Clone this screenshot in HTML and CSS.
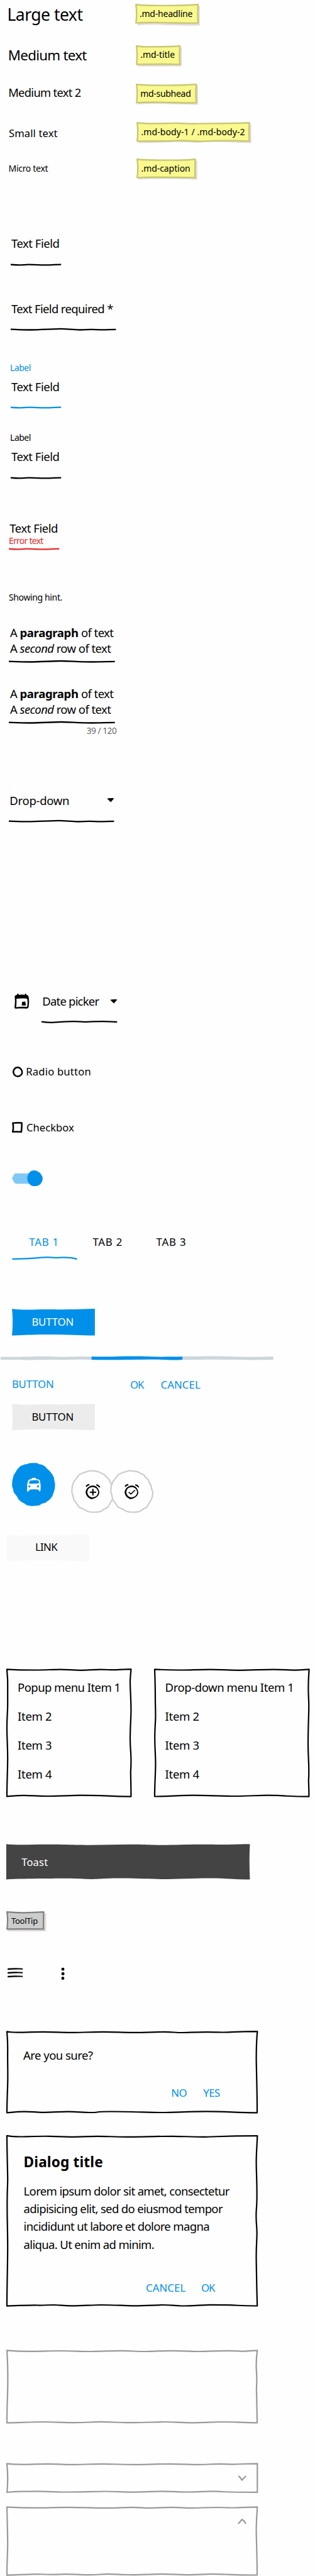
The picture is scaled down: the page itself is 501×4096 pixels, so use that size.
FILE: index.html
```
<!DOCTYPE html>
<html lang="en">
<head>
<meta charset="utf-8">
<title>Wireframe kit</title>
<link rel="stylesheet" href="styles.css">
</head>
<body>
<main class="page">

  <section class="spec spec-headline">
    <div class="t-headline">Large text</div>
    <div class="note note-headline">
      <svg class="sketch"><path class="shade" d="M3.3 4.8 102.7 3.5V34.6C70 35.6 20 31 3.3 34.6Z"/><path class="paper" d="M1.2 1.2C15 3.2 66 3.6 100 1.3C99.6 10 99.4 22 100 30.4C70 31.6 38 28.4 1.2 30.4C2.6 20 2.4 9 1.2 1.2Z"/></svg>
      <span>.md-headline</span>
    </div>
  </section>
  <section class="spec spec-title">
    <div class="t-title">Medium text</div>
    <div class="note note-title">
      <svg class="sketch"><path class="shade" d="M3.3 4.8 73 3.5V33.4H3.3Z"/><path class="paper" d="M1.2 1.2C12 2.8 40 2.6 70.2 1.2C69.4 10 69.2 22 70.2 30.4C50 29.6 28 30 1.2 30.4C2.4 20 2 9 1.2 1.2Z"/></svg>
      <span>.md-title</span>
    </div>
  </section>
  <section class="spec spec-subhead">
    <div class="t-subhead">Medium text 2</div>
    <div class="note note-subhead">
      <svg class="sketch"><path class="shade" d="M3.3 4.8 99 3.5V33.4C70 33.8 20 30.6 3.3 33.4Z"/><path class="paper" d="M1.2 1.2C15 2.8 66 3.4 96.2 1.3C95.4 10 95.4 22 96.2 30.4C66 31 28 28 1.2 30.4C2.6 20 2.4 9 1.2 1.2Z"/></svg>
      <span>md-subhead</span>
    </div>
  </section>
  <section class="spec spec-body">
    <div class="t-body1">Small text</div>
    <div class="note note-body">
      <svg class="sketch"><path class="shade" d="M3.3 4.8 182.6 3.5V33.6C150 32.4 120 30.6 95 33C60 30.6 40 33.6 3.3 33.4Z"/><path class="paper" d="M1.2 1.2C25 4 45 1.4 66 2S86 3.2 96 2.6S140 3 179.6 1.3C179 10 179 22 179.6 30.4C150 29.4 130 29 112 30.4S80 28.6 64 29.6S20 30.4 1.2 30.4C2.6 20 2.4 9 1.2 1.2Z"/></svg>
      <span>.md-body-1 / .md-body-2</span>
    </div>
  </section>
  <section class="spec spec-caption">
    <div class="t-caption">Micro text</div>
    <div class="note note-caption">
      <svg class="sketch"><path class="shade" d="M3.3 4.8 96.6 3.5V33.4C60 32.4 20 31.8 3.3 33.4Z"/><path class="paper" d="M1.2 1.2C20 3.2 36 2.6 50 2.6S78 3.4 93.6 1.3C93 10 92.8 22 93.6 30.4C66 30.4 30 28.8 1.2 30.4C2.6 20 2.4 9 1.2 1.2Z"/></svg>
      <span>.md-caption</span>
    </div>
  </section>

  <section class="field field-plain">
    <div class="value">Text Field</div>
    <svg class="rule"><path d="M0 2.7C4 2.9 8 3.4 13 3.4S24 2.7 29 2.7S44 3.5 53 3.4S70 2.8 80.2 2.7"/></svg>
  </section>
  <section class="field field-required">
    <div class="value long">Text Field required *</div>
    <svg class="rule"><path d="M0 2.7C10 2.9 20 3.5 32 3.5S70 1.9 80 1.9S100 3.5 110 3.5S120 2.8 128 2.8S138 3.4 146 3.4S158 2.8 167.4 2.8"/></svg>
  </section>
  <section class="field field-focus">
    <div class="label">Label</div>
    <div class="value">Text Field</div>
    <svg class="rule"><path d="M0 2.7C4 2.9 8 3.4 13 3.4S24 2.7 29 2.7S44 3.5 53 3.4S70 2.8 80.2 2.7"/></svg>
  </section>
  <section class="field field-label">
    <div class="label">Label</div>
    <div class="value">Text Field</div>
    <svg class="rule"><path d="M0 2.7C4 2.9 8 3.4 13 3.4S24 2.7 29 2.7S44 3.5 53 3.4S70 2.8 80.2 2.7"/></svg>
  </section>
  <section class="field field-error">
    <div class="value">Text Field</div>
    <div class="error">Error text</div>
    <svg class="rule"><path d="M0 2.7C4 2.9 8 3.4 13 3.4S24 2.7 29 2.7S44 3.5 53 3.4S70 2.8 80.2 2.7"/></svg>
  </section>
  <section class="hint">Showing hint.</section>

  <section class="field area area-plain">
    <p class="value">A <b>paragraph</b> of text<br>A <i>second</i> row of text</p>
    <svg class="rule"><path d="M0 2.7C12 2.9 22 3.5 35 3.5S72 1.9 84 2S115 3.5 133 3.5S155 2.8 168.7 2.8"/></svg>
  </section>
  <section class="field area area-counter">
    <p class="value">A <b>paragraph</b> of text<br>A <i>second</i> row of text</p>
    <svg class="rule"><path d="M0 2.7C12 2.9 22 3.5 35 3.5S72 1.9 84 2S115 3.5 133 3.5S155 2.8 168.7 2.8"/></svg>
    <div class="counter">39 / 120</div>
  </section>

  <section class="field select">
    <div class="picker"><span class="value">Drop-down</span>
      <svg class="arrow" viewBox="0 0 12 7"><path d="M0 .7C4 0 8 0 12 .4L6.3 6.8Z"/></svg></div>
    <svg class="rule"><path d="M0 2.7C12 2.9 22 3.5 33 3.4S70 1.9 80 1.9S100 3.5 110 3.5S120 2.8 128 2.8S138 3.4 146 3.4S158 2.8 167.4 2.8"/></svg>
  </section>

  <section class="date">
    <svg class="calendar" viewBox="0 0 23.4 23.8"><path fill-rule="evenodd" d="M4.4 0H6.3L7 2C10 1.4 14 1.4 16.2 2L17 0H18.8V2C21 2.2 22.2 3 22.4 4.6C23.6 10 23.4 16 22.4 21.4C22 23 20.6 23.6 19 23.7C13 23.2 8 23.4 1 23.8L0 22C1.2 15 1 9 .3 4.2C1 2.6 3 2 4.2 2ZM3 8.2C3.6 13 3.2 17 2.6 21.4C9 20.4 14 20.6 20 21C21.2 16.5 21 12 20.2 8C14 7.4 8 7.4 3 8.2ZM12.2 13L17.2 12.5L18.2 18.7L11.6 18.8Z"/></svg>
    <div class="field">
      <div class="picker"><span class="value">Date picker</span>
        <svg class="arrow" viewBox="0 0 12 7"><path d="M0 .7C4 0 8 0 12 .4L6.3 6.8Z"/></svg></div>
      <svg class="rule"><path d="M0 2.7C6 3.3 10 3.8 16 3.8S40 2 52 2.1S64 2.9 69 2.9S85 2.1 98 2.2S112 2.6 120.3 2.8"/></svg>
    </div>
  </section>

  <section class="choice choice-radio">
    <svg viewBox="0 0 17 17"><path d="M8.2 1.3C12 1.2 13 4 14 5C15.6 7 15.6 11 13.8 12.8C12 15 10.4 15.6 8.2 15.4C4.6 15.4 3 13.4 2.2 12C.9 9 1.2 6 2.6 4.2C4 2.2 6 1.2 8.2 1.3Z"/></svg>
    <span>Radio button</span>
  </section>
  <section class="choice choice-check">
    <svg viewBox="0 0 17 17"><path d="M1.4 1.8C6 1 11 1.1 15.6 1.6C16 6 15.2 11 15 15.8C10 15.2 6 15.5 1.2 15.7C2.6 11 2.2 6 1.4 1.8Z"/></svg>
    <span>Checkbox</span>
  </section>
  <section class="switch">
    <svg viewBox="0 0 49 25"><path class="track" d="M6 4.8H34V21.3C24 20.8 14 21.6 7 21.2C4.6 20.8 3.4 19.6 3 18L0 12.8L2.2 9C2.6 6.6 4 5.2 6 4.8Z"/><path class="thumb" d="M35 .1C39 .2 41 1.8 44 3.6C46.6 6 47 8 48.8 11C49.2 16 47.6 19.4 44.6 22.4C41 24.6 39 25 36 25C31 25 28.4 22.6 26.2 19.4C24 15 23.8 10.6 25.4 7.4C27.4 2.6 30.4 .2 35 .1Z"/></svg>
  </section>

  <section class="tabs">
    <nav><a class="active">TAB 1</a><a>TAB 2</a><a>TAB 3</a></nav>
    <svg><path d="M1.2 5.8C30 6 44 3.2 56 3.2S66 4.2 72 3.8S92 3 102.7 5.8"/></svg>
  </section>

  <section class="action action-primary">
    <div class="btn primary"><svg class="sketch"><path d="M0 .3C20 2.6 40 .8 58 1S90 1.4 131.9 0V42.4C110 42.4 90 41 60 40.9S20 42 0 42.4C1.4 30 1.6 14 0 .3Z"/></svg><span>BUTTON</span></div>
  </section>

  <section class="progress">
    <svg><path class="rail" d="M.3 1.4C30 2 60 .6 74 .8S90 1.7 100 1.5S130 .5 146 1.2S260 1.2 290 1S340 .2 370 1S410 1.6 434.8 1V6C400 6.9 370 6 345 5.7S310 6.4 290 6.3H145C120 5 110 6.6 96 6.2S60 6.9 38 6.4S10 6.2 .3 6.2L1.4 4Z"/><path class="fill" d="M145.4 1C170 2 195 .4 218 .6S245 1.9 262 1.4S275 1.8 290.4 1.1L290 6C275 7.4 265 5.8 245 5.5S185 7 145.8 6.1Z"/></svg>
  </section>

  <section class="flat">
    <span class="flat-button">BUTTON</span><span class="flat-ok">OK</span><span class="flat-cancel">CANCEL</span>
  </section>

  <section class="action action-neutral">
    <div class="btn neutral"><svg class="sketch"><path d="M0 .3C20 2.6 40 .8 58 1S90 1.4 131.9 0V42.1C110 42.1 90 40.7 60 40.6S20 41.7 0 42.1C1.4 30 1.6 14 0 .3Z"/></svg><span>BUTTON</span></div>
  </section>

  <section class="fabs">
    <svg class="fab" viewBox="20 28 350 352">
      <path class="disc" d="M165 32 205 30 225 32 238 40 265 45 290 60 300 72 325 95 345 120 360 150 362 170 368 200 366 235 358 265 345 300 325 325 290 350 262 358 240 372 180 377 140 370 120 355 100 345 75 325 62 300 35 265 30 240 22 215 25 170 35 128 52 102 65 80 90 55 125 42 140 40Z"/>
      <path class="cab" fill-rule="evenodd" d="M178 151 212 149 215 158 228 160C240 163 247 168 247 176L253 212 251 256 242 260 236 246C210 240 185 241 160 246L158 258 142 260 144 212 142 204 150 178C152 166 160 161 180 160ZM165 172 157 196C185 199 215 198 242 194L234 170C210 166 185 168 165 172ZM154 211 153 223 163 229 172 214ZM221 213 226 228 239 226 236 209Z"/>
    </svg>
    <svg class="ring ring-first" viewBox="500 82 350 352">
      <path class="edge" d="M648 91C680 87 700 92 722 98L745 110 772 122 788 143 810 163 820 190 833 210 838 240 847 262 843 300 833 325 813 360 798 385 765 403 740 420C700 428 660 428 632 418L600 400 565 385 545 355 522 325 515 290 506 260 510 215 522 180 545 150 565 122 600 106Z"/>
      <path class="bell" d="M622 218 632 208 648 202M705 204 720 210 733 224"/>
      <path class="clock" fill-rule="evenodd" d="M672 210C700 208 726 232 729 264C729 292 704 312 668 320C640 316 622 292 618 266C622 232 644 212 672 210ZM676 222C650 222 633 240 632 264C634 290 655 306 676 306C702 304 719 286 720 262C716 238 700 224 676 222Z"/>
      <path class="mark plus" d="M677 237V289M652 264H703"/>
    </svg>
    <svg class="ring ring-second" viewBox="500 82 350 352">
      <path class="edge" d="M648 91C680 87 700 92 722 98L745 110 772 122 788 143 810 163 820 190 833 210 838 240 847 262 843 300 833 325 813 360 798 385 765 403 740 420C700 428 660 428 632 418L600 400 565 385 545 355 522 325 515 290 506 260 510 215 522 180 545 150 565 122 600 106Z"/>
      <path class="bell" d="M622 218 632 208 648 202M705 204 720 210 733 224"/>
      <path class="clock" fill-rule="evenodd" d="M672 210C700 208 726 232 729 264C729 292 704 312 668 320C640 316 622 292 618 266C622 232 644 212 672 210ZM676 222C650 222 633 240 632 264C634 290 655 306 676 306C702 304 719 286 720 262C716 238 700 224 676 222Z"/>
      <path class="mark" d="M651 264 669 279 703 246"/>
    </svg>
  </section>

  <section class="action action-link">
    <div class="btn link"><svg class="sketch"><path d="M0 .3C20 2.6 40 .8 58 1S90 1.4 131.9 0V42.4C110 42.4 90 41 60 40.9S20 42 0 42.4C1.4 30 1.6 14 0 .3Z"/></svg><span>LINK</span></div>
  </section>

  <section class="menus">
    <ul class="menu menu-popup">
      <svg class="sketch frame"><path d="M1 1.3C15 2.2 33 2.5 47 2.5S74 1.6 86 1.6S107 2.8 119 2.8S140 1.7 150 1.7S163 2.2 169 2.2S185 1.3 198.4 1.2C198 8 197 14 197 22S198.4 52 198.4 65S197 95 197 112S198.4 130 198.4 146S197.8 160 197.8 164S198.4 190 198.4 203.6C180 203.6 160 202.6 150 202.2S130 201.7 118 201.7S80 203 65 203S40 201.8 28 201.8S10 202.8 1 203.5C1 180 2.2 160 2.2 143S1 110 1 94S2.2 70 2.2 56S2.2 30 2.2 22S1.2 8 1 1.3Z"/></svg>
      <li>Popup menu Item 1</li><li>Item 2</li><li>Item 3</li><li>Item 4</li>
    </ul>
    <ul class="menu menu-dropdown">
      <svg class="sketch frame"><path d="M1 1.3C15 2.2 33 2.6 45 2.5S75 1.6 90 1.6S120 2.9 136 2.8S175 1.6 190 1.6S215 2.6 225 2.6S238 1.8 246.6 1.3C246 10 245.4 22 245.4 32S246.2 50 246.2 61S245 95 245 118S246.2 145 246.2 162S245.8 174 245.8 178S246.4 190 246.4 203.6C225 203.6 218 203 205 202.4S195 201.6 180 201.6S150 203 130 203S80 201.6 62 201.7S20 203.3 1 203.5C1 180 2.4 170 2.4 152S1.2 130 1.2 110S2.4 90 2.4 75S2 60 2 50S1.4 12 1 1.3Z"/></svg>
      <li>Drop-down menu Item 1</li><li>Item 2</li><li>Item 3</li><li>Item 4</li>
    </ul>
  </section>

  <section class="toast">
    <div><svg class="sketch"><path d="M0 .2C15 2.2 40 .7 70 .8S110 1.8 133 1.7S180 .5 205 .8S235 2 255 1.7S300 .6 320 .8S340 1.2 350 1S375 .2 387.5 .2C386.4 18 386.6 38 387.5 56.5C365 56.5 350 54.6 325 54.5S270 56 250 56S210 54.4 180 54.6S150 56 136 56S110 54.6 100 54.8S30 54.6 0 56.5Z"/></svg><span>Toast</span></div>
  </section>

  <section class="tooltip">
    <div><svg class="sketch"><path class="shade" d="M2.4 5 63.4 3.8V32.1H2.4Z"/><path class="slate" d="M1.1 1.2C15 2.6 35 2.8 59.6 1.2C59.2 10 58.8 20 59.4 28.4C40 28 20 28 1.1 28.4C2.4 20 2.2 9 1.1 1.2Z"/></svg><span>ToolTip</span></div>
  </section>

  <section class="icons">
    <svg class="burger" viewBox="0 0 25 18"><path d="M.4 1.8C8 1 17 1 24 1.8L24.3 3.8C16 3.4 8 3.5 0 4.3ZM.4 7.8C8 7 17 7 24 7.8L24.3 9.8C16 9.2 8 9.5 0 10.3ZM.4 13.8C8 12.9 17 13 24 13.7L24.3 15.6C16 15.2 8 15.4 0 16.2Z"/></svg>
    <svg class="dots" viewBox="0 0 6 21"><ellipse cx="3" cy="3.1" rx="2.5" ry="2.4"/><ellipse cx="3.1" cy="10.4" rx="2.5" ry="2.3"/><ellipse cx="2.9" cy="17.4" rx="2.4" ry="2.5"/></svg>
  </section>

  <section class="dialog dialog-confirm">
    <svg class="sketch frame"><path d="M1 1.3C6 2.6 10 2.7 18 2.7S45 1.9 60 1.9S90 3 104 2.9S135 1.9 155 1.9S185 3 203 2.9S240 1.9 252 1.9S270 3.1 280 3S300 2 320 2.1S335 2.6 345 2.5S370 1.2 399.3 1.2C398 15 397.6 30 397.6 44S399 90 399 130.3C370 130.3 350 128.5 320 128.4S265 130.2 245 130S190 128.4 165 128.5S148 130.1 135 130S110 128.5 98 128.6S70 129.9 58 129.8S40 128.4 28 128.6S10 129.6 1 130.3C1 110 2.4 90 2.4 72S2 50 2.2 32S1.6 12 1 1.3Z"/></svg>
    <p>Are you sure?</p>
    <div class="actions"><span class="no">NO</span><span class="yes">YES</span></div>
  </section>

  <section class="dialog dialog-full">
    <svg class="sketch frame"><path d="M1 .9C10 2.6 20 2.8 32 2.3S55 1.7 70 1.8S90 2.9 104 2.8S130 1.8 145 1.8S175 3 196 2.8S250 1.7 265 1.8S300 3 317 2.8S350 1 399.3 1.1C398.6 20 397.4 30 397.6 46S398.8 75 398.6 98S397.2 115 397.4 130S398.8 145 398.6 158S397.2 180 397.6 200S398.4 250 399.2 271.5C375 271.6 370 270.6 355 270.2S335 269.8 325 269.8S290 271.8 278 271.5S260 269.8 248 270S215 271.6 200 271.3S165 269.8 150 270S115 271.8 102 271.4S85 270 76 270S60 270.7 50 270.5S20 271 1 271.6C1 240 2.4 200 2.2 172S1.2 130 1.4 105S2.4 80 2.2 67S1.2 30 1 .9Z"/></svg>
    <h2>Dialog title</h2>
    <p>Lorem ipsum dolor sit amet, consectetur<br>adipisicing elit, sed do eiusmod tempor<br>incididunt ut labore et dolore magna<br>aliqua. Ut enim ad minim.</p>
    <div class="actions"><span class="cancel">CANCEL</span><span class="ok">OK</span></div>
  </section>

  <section class="panel panel-plain">
    <svg class="sketch frame"><path d="M1 1.3C15 2.4 30 2.9 45 2.8S70 2 88 2S120 3.1 136 3S165 1.9 183 1.9S205 3.1 221 3S245 1.9 262 1.9S290 3 306 3S335 1.8 352 1.8S370 2.6 376 2.6S390 1.4 399.3 1.3C398 10 397.4 20 397.6 28S398.6 40 398.4 50S397.6 60 398 68S398.6 95 399 116.4C385 116.4 375 115.8 365 115.4S350 115 340 115S310 116.4 294 116.3S265 114.8 250 115S215 116.3 196 116.2S165 114.8 150 114.9S125 116.2 108 116.1S75 115 60 115S20 116 1 116.4C1 90 2.4 70 2.4 50S2.2 35 2.2 28S1.4 8 1 1.3Z"/></svg>
  </section>
  <section class="panel panel-closed">
    <svg class="sketch frame"><path d="M1 1.3C10 2.4 18 2.7 28 2.6S50 1.8 66 1.8S90 2.9 108 2.8S140 1.7 155 1.8S185 3 206 2.8S240 1.8 260 1.8S290 2.9 306 2.8S330 1.8 340 1.9S355 2.4 363 2.3S380 1.4 399.3 1.4V46.9C370 46.9 355 46.4 345 46S335 45.3 325 45.4S300 46.6 286 46.5S260 45.3 247 45.4S215 46.8 200 46.6S170 45.3 155 45.5S115 46.7 95 46.5S60 45.3 48 45.3S35 45.8 28 45.7S10 46 1 47C2 40 2.2 30 2.2 24S1.6 8 1 1.3Z"/></svg>
    <svg class="chevron" viewBox="0 0 14 9"><path d="M.9 1C3.6 1.8 4.8 4.4 6.8 7.4L13 1"/></svg>
  </section>
  <section class="panel panel-open">
    <svg class="sketch frame"><path d="M1 1.3C15 2.2 35 2.8 50 2.7S80 1.9 100 1.9S140 3 160 2.9S185 1.8 200 1.8S215 3 230 2.9S245 1.9 262 1.8S280 3 294 2.9S315 1.9 335 2S350 2.6 360 2.5S380 1.3 399.3 1.3C398.4 15 397.6 25 397.6 38S399 80 399 109.5C375 109.6 360 108.9 350 108.5S335 107.8 325 107.9S305 109.3 288 109.1S260 107.9 248 107.9S215 109.3 195 109S175 107.8 162 107.9S145 109.3 130 109.1S105 107.9 92 108.2S75 108.7 65 108.5S55 107.9 45 108.2S20 109 1 109.6C1 90 2.2 75 2.2 60S1.4 20 1 1.3Z"/></svg>
    <svg class="chevron" viewBox="0 0 14 9"><path d="M1 8 6.8 1.2C9.4 2.6 12 5 12.6 8"/></svg>
  </section>

</main>
</body>
</html>
```
FILE: styles.css
```
* { box-sizing: border-box; }
body { margin: 0; background: #fefefe; color: #000; font-family: "Noto Sans", "Open Sans", sans-serif; }
svg { display: block; overflow: visible; flex: none; }
p, h2, ul { margin: 0; padding: 0; }
ul { list-style: none; }

.page { width: 501px; height: 4096px; padding-top: 5.9px; display: flex; flex-direction: column; overflow: hidden; white-space: nowrap; }
.page > * { flex: none; }

/* hand-drawn outline stretched behind a box's content */
.sketch { position: absolute; left: 0; top: 0; width: 100%; height: 100%; z-index: -1; }
.frame path { fill: none; stroke: #000; stroke-width: 2.2; stroke-linejoin: round; }

/* type specimens */
.spec { display: flex; align-items: flex-start; padding-left: 14px; }
.spec > :first-child { width: 202px; }
.spec-headline { height: 66.2px; }
.spec-title { height: 61.3px; }
.spec-subhead { height: 60.9px; }
.spec-body { height: 57.9px; }
.spec-caption { height: 123.3px; }
.t-headline { font-size: 26.5px; line-height: 36px; letter-spacing: -.51px; margin: -1.3px 0 0 -2.6px; }
.t-title { font-size: 22.3px; line-height: 30px; letter-spacing: -.72px; margin: 1.1px 0 0 -1.2px; }
.t-subhead { font-size: 18.3px; line-height: 24px; letter-spacing: -.66px; margin: 1.9px 0 0 -.8px; }
.t-body1 { font-size: 16.6px; line-height: 24px; letter-spacing: .1px; margin-top: 5.3px; }
.t-caption { font-size: 14px; line-height: 20px; letter-spacing: -.3px; margin: 6px 0 0 -.5px; }
.note { position: relative; z-index: 0; height: 31.5px; padding: 6px 0 0 7.2px; font-size: 14px; line-height: 20px; }
.note-headline { width: 101.3px; margin-left: 1.3px; letter-spacing: -.2px; }
.note-title { width: 71.5px; margin-left: 1.2px; letter-spacing: -.04px; padding-top: 5.4px; }
.note-subhead { width: 97.4px; margin-left: .8px; letter-spacing: -.29px; padding-top: 5.6px; }
.note-body { width: 181px; margin-left: 1.3px; letter-spacing: .09px; }
.note-caption { width: 94.8px; margin-left: 1.8px; letter-spacing: -.07px; }
.shade { fill: #e2dadb; }
.paper { fill: #f9f990; stroke: #c8c873; stroke-width: 2.4; stroke-linejoin: round; }

/* inputs */
.field { padding-left: 16.6px; }
.value { font-size: 18.5px; line-height: 24px; letter-spacing: -.47px; padding-left: 1.3px; }
.value.long { letter-spacing: -.65px; }
.label, .error { font-size: 14px; line-height: 20px; letter-spacing: -.52px; margin-bottom: 8px; margin-left: -.5px; }
.rule { width: 170px; height: 6px; margin-top: 18.4px; }
.rule path { fill: none; stroke: #000; stroke-width: 2.3; }
.field-plain { height: 103.6px; }
.field-required { height: 95.8px; }
.field-focus { height: 111.6px; }
.field-focus .label { color: #0090ea; }
.field-focus .rule path { stroke: #0090ea; }
.field-label { height: 141.3px; }
.field-error { height: 112.2px; padding-left: 14px; }
.error { color: #e52b2b; letter-spacing: -.75px; margin: -1.3px 0 0; }
.field-error .rule { margin-top: -.4px; }
.field-error .rule path { stroke: #e52b2b; }
.hint { height: 54.4px; padding-left: 14px; font-size: 14px; line-height: 20px; letter-spacing: -.37px; }
.area { padding-left: 14px; }
.area .value { line-height: 24.8px; letter-spacing: -.58px; padding-left: 2px; }
.area .value b { letter-spacing: -.33px; }
.area .rule { margin-top: 5px; }
.area-plain { height: 96.8px; }
.area-counter { height: 169.6px; }
.counter { width: 171.3px; text-align: right; color: #666; font-size: 13.6px; line-height: 20px; letter-spacing: -.42px; }
.select { height: 318.8px; padding-left: 14px; }
.picker { display: flex; align-items: center; justify-content: space-between; width: 167.5px; }
.picker .value { letter-spacing: -.29px; }
.arrow { width: 11.7px; height: 6.6px; }
.date { height: 112.1px; padding-left: 22.7px; display: flex; align-items: flex-start; }
.calendar { width: 23.4px; height: 23.8px; }
.date .field { padding: .9px 0 0; margin-left: 19.9px; }
.date .picker { width: 120.3px; }
.date .value { letter-spacing: -.8px; }
.date .rule { width: 120px; margin-top: 17.9px; }

/* choices */
.choice { display: flex; align-items: flex-start; padding-left: 19.6px; font-size: 16.6px; line-height: 24px; }
.choice svg { width: 17px; height: 17px; margin-top: 4.2px; }
.choice path { fill: none; stroke: #000; stroke-width: 2.5; stroke-linejoin: round; }
.choice-radio { height: 89.8px; letter-spacing: .21px; }
.choice-radio span { margin-left: 4.6px; }
.choice-check { height: 79.5px; padding-left: 18.9px; }
.choice-check svg { margin-top: 2.6px; }
.choice-check span { margin-left: 6.2px; }
.switch { height: 102px; padding-left: 18.9px; }
.switch svg { width: 49px; height: 25px; }
.track { fill: #81c8f6; }
.thumb { fill: #0090ea; }

.tabs { height: 118.6px; padding-left: 18.9px; }
.tabs nav { display: flex; padding-left: 27.3px; font-size: 16.8px; line-height: 24px; letter-spacing: .8px; }
.tabs a { width: 101.2px; }
.tabs .active { color: #0090ea; }
.tabs svg { width: 104px; height: 8px; margin-top: 8.8px; }
.tabs path { fill: none; stroke: #0090ea; stroke-width: 2.3; stroke-linecap: round; }

/* buttons */
.action { padding-left: 18.9px; }
.action-primary { height: 74.3px; }
.action-neutral { height: 94px; }
.action-link { height: 213.3px; padding-left: 9.6px; }
.btn { position: relative; z-index: 0; width: 131.9px; height: 42.4px; padding: 8.3px 0 0 31.5px; font-size: 16.8px; line-height: 24px; letter-spacing: -.19px; }
.primary { color: #fff; }
.primary path { fill: #0090ea; }
.neutral path { fill: #ececec; }
.link { padding-left: 46.4px; letter-spacing: -.68px; }
.link path { fill: #f9f9f9; }
.progress { height: 33px; }
.progress svg { width: 435px; height: 7px; }
.rail { fill: #ccd6db; }
.fill { fill: #0090ea; }
.flat { height: 43.5px; display: flex; align-items: flex-start; padding-left: 18.9px; color: #0090ea; font-size: 16.8px; line-height: 24px; }
.flat-button { width: 188.1px; letter-spacing: -.19px; }
.flat-ok { width: 48.5px; margin-top: 1.3px; letter-spacing: -1.1px; }
.flat-cancel { margin-top: 1.3px; letter-spacing: .1px; }
.fabs { height: 113.4px; padding-left: 18.9px; display: flex; align-items: flex-start; }
.fab, .ring { width: 68.7px; height: 69.1px; }
.disc { fill: #0090ea; stroke: #0090ea; stroke-width: 3; stroke-linejoin: round; }
.cab { fill: #fff; }
.ring { margin-top: 10.6px; }
.ring-first { margin-left: 25.5px; }
.ring-second { margin-left: -7.2px; }
.edge { fill: #fefefe; stroke: #ccc; stroke-width: 11; stroke-linejoin: round; }
.bell { fill: none; stroke: #000; stroke-width: 11; }
.mark { fill: none; stroke: #000; stroke-width: 8; }
.plus { stroke-width: 11; }

/* surfaces */
.menus { height: 279px; padding-left: 10.2px; display: flex; align-items: flex-start; gap: 35.1px; }
.menu { position: relative; z-index: 0; height: 204.8px; padding: 18.2px 0 0 17.9px; font-size: 18.5px; line-height: 24px; }
.menu li { height: 46px; letter-spacing: -.3px; }
.menu-popup { width: 199.4px; }
.menu-dropdown { width: 247.6px; }
.menu-popup li:nth-of-type(1) { letter-spacing: -.56px; }
.menu-dropdown li:nth-of-type(1) { letter-spacing: -.43px; }
.toast { height: 107px; padding-left: 9.6px; }
.toast div { position: relative; z-index: 0; width: 387.5px; height: 56.5px; padding: 16.8px 0 0 24.6px; color: #fff; font-size: 16.6px; line-height: 24px; letter-spacing: .15px; }
.toast path { fill: #444; }
.tooltip { height: 88.9px; padding-left: 9.6px; }
.tooltip div { position: relative; z-index: 0; width: 60.7px; height: 29.6px; padding: 5.1px 0 0 8.4px; font-size: 13px; line-height: 20px; letter-spacing: -.3px; }
.slate { fill: #ccc; stroke: #808080; stroke-width: 2.2; stroke-linejoin: round; }
.icons { height: 101.2px; padding-left: 11.8px; display: flex; align-items: flex-start; }
.burger { width: 25px; height: 18px; }
.dots { width: 6px; height: 21px; margin-left: 60.3px; }
.dialog { position: relative; z-index: 0; width: 400.2px; margin-left: 9.9px; font-size: 18.5px; line-height: 24px; }
.dialog-confirm { height: 131.3px; margin-bottom: 34.7px; padding: 27.4px 0 0 27.1px; }
.dialog-confirm p { letter-spacing: -.52px; }
.actions { display: flex; color: #0090ea; font-size: 16.8px; }
.dialog-confirm .actions { padding: 35.7px 0 0 235.2px; }
.no { width: 51px; letter-spacing: -.4px; }
.yes { letter-spacing: -.51px; }
.dialog-full { height: 272.8px; margin-bottom: 68.5px; padding: 27.6px 0 0 27.7px; }
.dialog-full h2 { font-size: 22.6px; line-height: 30px; letter-spacing: .15px; }
.dialog-full p { margin-top: 17.4px; line-height: 28.2px; letter-spacing: -.65px; }
.dialog-full .actions { padding: 43px 0 0 194.4px; }
.cancel { width: 88px; letter-spacing: .1px; }
.ok { letter-spacing: -1.1px; }
.panel { position: relative; z-index: 0; width: 400.2px; margin-left: 9.9px; display: flex; justify-content: flex-end; align-items: flex-start; padding: 20.2px 18.3px 0 0; }
.panel .frame path { stroke: #999; }
.panel-plain { height: 117.4px; margin-bottom: 61.9px; }
.panel-closed { height: 47.9px; margin-bottom: 21.4px; }
.panel-open { height: 110.9px; }
.chevron { width: 14px; height: 9px; }
.chevron path { fill: none; stroke: #999; stroke-width: 2.2; }
```
